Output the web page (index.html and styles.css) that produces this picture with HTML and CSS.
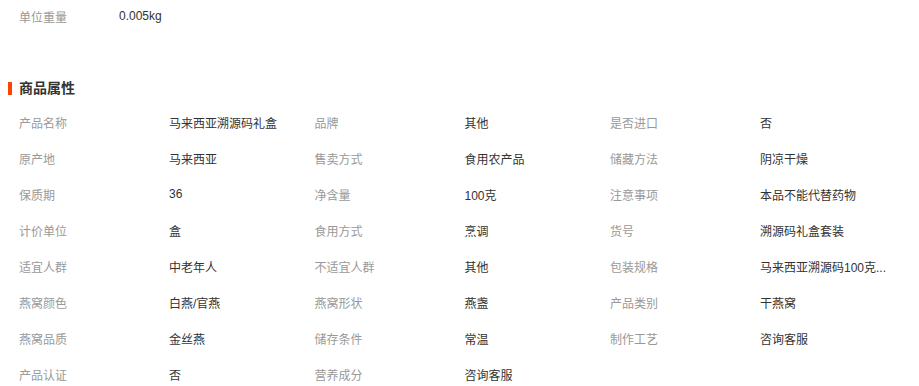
FILE: index.html
```html
<!DOCTYPE html>
<html lang="zh-CN">
<head>
<meta charset="utf-8">
<title>商品属性</title>
<link rel="stylesheet" href="styles.css">
</head>
<body>
<div class="page">
  <div class="top-row">
    <span class="top-label">单位重量</span>
    <span class="top-value">0.005kg</span>
  </div>
  <h3 class="section-title">商品属性</h3>
  <ul class="attrs">
    <li><span class="k">产品名称</span><span class="v">马来西亚溯源码礼盒</span></li>
    <li><span class="k">品牌</span><span class="v">其他</span></li>
    <li><span class="k">是否进口</span><span class="v">否</span></li>
    <li><span class="k">原产地</span><span class="v">马来西亚</span></li>
    <li><span class="k">售卖方式</span><span class="v">食用农产品</span></li>
    <li><span class="k">储藏方法</span><span class="v">阴凉干燥</span></li>
    <li><span class="k">保质期</span><span class="v">36</span></li>
    <li><span class="k">净含量</span><span class="v">100克</span></li>
    <li><span class="k">注意事项</span><span class="v">本品不能代替药物</span></li>
    <li><span class="k">计价单位</span><span class="v">盒</span></li>
    <li><span class="k">食用方式</span><span class="v">烹调</span></li>
    <li><span class="k">货号</span><span class="v">溯源码礼盒套装</span></li>
    <li><span class="k">适宜人群</span><span class="v">中老年人</span></li>
    <li><span class="k">不适宜人群</span><span class="v">其他</span></li>
    <li><span class="k">包装规格</span><span class="v">马来西亚溯源码100克...</span></li>
    <li><span class="k">燕窝颜色</span><span class="v">白燕/官燕</span></li>
    <li><span class="k">燕窝形状</span><span class="v">燕盏</span></li>
    <li><span class="k">产品类别</span><span class="v">干燕窝</span></li>
    <li><span class="k">燕窝品质</span><span class="v">金丝燕</span></li>
    <li><span class="k">储存条件</span><span class="v">常温</span></li>
    <li><span class="k">制作工艺</span><span class="v">咨询客服</span></li>
    <li><span class="k">产品认证</span><span class="v">否</span></li>
    <li><span class="k">营养成分</span><span class="v">咨询客服</span></li>
  </ul>
</div>
</body>
</html>
```

FILE: styles.css
```css
* { box-sizing: border-box; }
html, body { margin: 0; padding: 0; background: #fff; }
body {
  font-family: "Liberation Sans", "Noto Sans CJK SC", sans-serif;
  font-size: 12px;
  color: #333;
}
.page { width: 919px; }
.top-row {
  display: flex;
  align-items: center;
  height: 32px;
  padding-left: 19px;
}
.top-label { width: 100px; color: #999; }
.top-value { color: #333; }
.section-title {
  margin: 46px 0 0 0;
  padding-left: 19px;
  position: relative;
  font-size: 14px;
  line-height: 20px;
  font-weight: bold;
  color: #333;
}
.section-title::before {
  content: "";
  position: absolute;
  left: 8px;
  top: 4px;
  width: 4px;
  height: 13px;
  background: #ff4400;
}
.attrs {
  list-style: none;
  margin: 6px 0 0 0;
  padding: 0 0 0 19px;
  display: grid;
  grid-template-columns: repeat(3, 295.5px);
  grid-auto-rows: 36px;
}
.attrs li {
  display: flex;
  align-items: center;
}
.k { width: 150px; flex: none; color: #999; }
.v {
  flex: none;
  color: #333;
  white-space: nowrap;
}
```
